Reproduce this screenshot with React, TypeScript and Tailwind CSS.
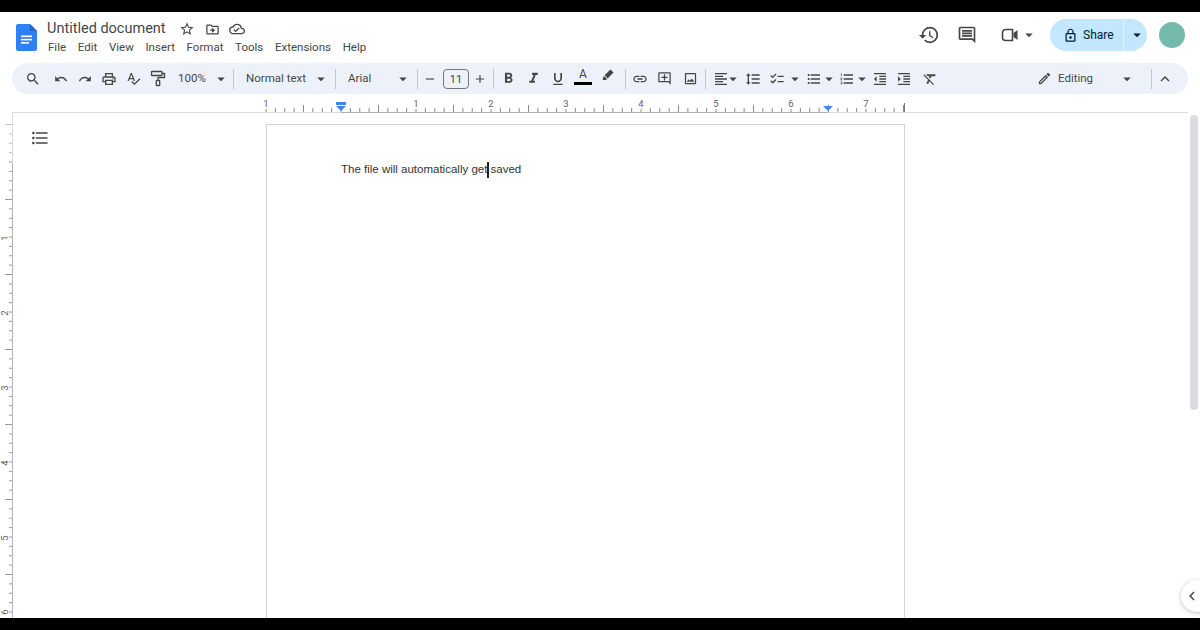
import { ReactNode } from "react"
import {
  MdSearch, MdUndo, MdRedo, MdOutlinePrint, MdSpellcheck, MdArrowDropDown,
  MdRemove, MdAdd, MdFormatBold, MdFormatItalic, MdFormatUnderlined, MdLink, MdOutlineAddComment,
  MdOutlineImage, MdFormatAlignLeft, MdFormatLineSpacing, MdChecklist, MdFormatListBulleted,
  MdFormatListNumbered, MdFormatIndentDecrease, MdFormatIndentIncrease, MdFormatClear, MdOutlineEdit,
  MdKeyboardArrowUp, MdKeyboardArrowLeft, MdStarBorder, MdOutlineDriveFileMove, MdOutlineCloudDone,
  MdHistory, MdOutlineComment, MdLockOutline,
} from "react-icons/md"

const menus = ["File", "Edit", "View", "Insert", "Format", "Tools", "Extensions", "Help"]

function Btn({ children, w = "w-[25px]" }: { children: ReactNode; w?: string }) {
  return <div className={`${w} h-6 flex items-center justify-center shrink-0 text-[#444746]`}>{children}</div>
}

function Divider({ className = "" }: { className?: string }) {
  return <div className={`w-px h-[20px] bg-[#c7c7c7] shrink-0 ${className}`} />
}

function Caret({ className = "" }: { className?: string }) {
  return <MdArrowDropDown size={18} className={`text-[#444746] shrink-0 ${className}`} />
}

function DocsLogo() {
  return (
    <svg width="21" height="27" viewBox="0 0 21 27" className="shrink-0">
      <path d="M2 0h12l7 7v18a2 2 0 0 1-2 2H2a2 2 0 0 1-2-2V2a2 2 0 0 1 2-2z" fill="#2f80f5" />
      <path d="M14 0l7 7h-7z" fill="#2a62c9" />
      <rect x="5" y="11.5" width="11" height="1.6" fill="#fff" />
      <rect x="5" y="14.8" width="11" height="1.6" fill="#fff" />
      <rect x="5" y="18.1" width="8" height="1.6" fill="#fff" />
    </svg>
  )
}

function PaintRoller() {
  return (
    <svg width="16" height="17" viewBox="0 0 16 17" fill="none" stroke="#444746" strokeWidth="1.3">
      <rect x="1.5" y="1.5" width="10.5" height="4" rx="0.6" />
      <path d="M12 3.5h2.5v4H8v3" />
      <rect x="6.3" y="10.5" width="3.4" height="5" rx="0.6" />
    </svg>
  )
}

function Marker() {
  return (
    <svg width="14" height="14" viewBox="0 0 14 14" fill="#444746" className="-mt-[7px]">
      <path d="M9.4 1.5l3.1 3.1-5.8 5.8-3.1-3.1z" />
      <path d="M3 8l3 3-1 1H1.8v-1.8z" />
    </svg>
  )
}

function Camera() {
  return (
    <svg width="18" height="16" viewBox="0 0 18 16" fill="none" stroke="#444746" strokeWidth="1.6">
      <path d="M4.5 2.5h7v11h-7a3 3 0 0 1-3-3v-5a3 3 0 0 1 3-3z" />
      <path d="M12.5 6l4-3v10l-4-3z" fill="#444746" stroke="none" />
    </svg>
  )
}

function HRuler() {
  const ticks = []
  for (let k = -8; k <= 60; k++) {
    const x = 329 + 9.375 * k
    if (x > 892) break
    const half = k % 8 === 4 || k % 8 === -4
    const inch = k % 8 === 0
    ticks.push(<line key={k} x1={x} x2={x} y1={half ? 7 : inch ? 11 : 10} y2={14} stroke="#8a8a8a" strokeWidth="1" />)
  }
  const labels: [string, number][] = [["1", 254], ["1", 404], ["2", 479], ["3", 554], ["4", 629], ["5", 704], ["6", 779], ["7", 854]]
  return (
    <svg width="1176" height="15" viewBox="0 0 1176 15" className="block">
      {ticks}
      {labels.map(([t, x], i) => (
        <text key={i} x={x} y={9} fontSize="9.5" textAnchor="middle" fill="#5f6368" fontFamily="Roboto, sans-serif">{t}</text>
      ))}
      <line x1="892.5" x2="892.5" y1="5" y2="14" stroke="#777" />
      <rect x="0" y="14" width="1176" height="1" fill="#dadce0" />
      <rect x="329" y="14" width="487" height="1" fill="#b0b0b0" />
      <rect x="324" y="4" width="10" height="3" fill="#4285f4" />
      <path d="M324 8h10l-5 5z" fill="#4285f4" />
      <path d="M811 8h10l-5 5z" fill="#4285f4" />
    </svg>
  )
}

function VRuler() {
  const ticks = []
  for (let k = 0; k <= 54; k++) {
    const y = 11.5 + 9.375 * k
    const long = k % 8 === 0
    ticks.push(<line key={k} x1={long ? 5 : 9} x2={12} y1={y} y2={y} stroke={k < 4 ? "#c4c4c4" : "#999"} />)
  }
  const labels: [string, number][] = [["1", 125], ["2", 200], ["3", 275], ["4", 350], ["5", 425], ["6", 499]]
  return (
    <svg width="13" height="505" viewBox="0 0 13 505" className="block shrink-0">
      {ticks}
      {labels.map(([t, y], i) => (
        <text key={i} x={8} y={y} fontSize="9.5" textAnchor="middle" fill="#5f6368" fontFamily="Roboto, sans-serif" transform={`rotate(-90 8 ${y})`}>{t}</text>
      ))}
      <line x1="12.5" x2="12.5" y1="0" y2="50" stroke="#dadce0" />
      <line x1="12.5" x2="12.5" y1="50" y2="505" stroke="#b5b5b5" />
    </svg>
  )
}

export default function App() {
  return (
    <div className="h-[630px] w-[1200px] flex flex-col bg-white overflow-hidden relative font-['Roboto',sans-serif]">
      <div className="h-3 bg-black shrink-0" />

      {/* title bar */}
      <header className="h-[50px] shrink-0 flex items-start pl-4 pr-[15px] pt-[7px]">
        <div className="mt-[5px]"><DocsLogo /></div>
        <div className="ml-[10px] flex flex-col">
          <div className="flex items-center h-[20px]">
            <span className="text-[14.5px] text-[#444746] leading-5">Untitled document</span>
            <MdStarBorder size={16} className="ml-[13px] text-[#444746]" />
            <MdOutlineDriveFileMove size={15} className="ml-[10px] text-[#444746]" />
            <MdOutlineCloudDone size={16} className="ml-[9px] text-[#444746]" />
          </div>
          <nav className="flex -mt-[2px] gap-[11.7px] text-[11.5px] leading-5 text-[#444746] pl-px">
            {menus.map(m => <span key={m}>{m}</span>)}
          </nav>
        </div>
        <div className="ml-auto flex items-center h-[32px]">
          <MdHistory size={22} className="text-[#444746] ml-px" />
          <MdOutlineComment size={20} className="ml-[17px] text-[#444746]" />
          <div className="ml-[24px]"><Camera /></div>
          <Caret className="ml-[1px]" />
          <div className="ml-[12px] w-[97px] h-[32px] rounded-full bg-[#c2e7ff] flex items-center text-[#001d35]">
            <MdLockOutline size={15} className="ml-[13px]" />
            <span className="ml-[5px] text-[12px] w-[32px]">Share</span>
            <div className="ml-[8px] w-px h-full bg-[#e6f3fc]" />
            <MdArrowDropDown size={18} className="ml-[4px]" />
          </div>
          <div className="ml-3 w-[26px] h-[26px] rounded-full bg-[#74b9ac]" />
        </div>
      </header>

      {/* toolbar */}
      <div className="mx-3 mt-px h-[31px] shrink-0 rounded-full bg-[#edf2fa] flex items-center pl-[9px] pr-[10px] text-[11.5px] text-[#444746]">
        <Btn w="w-6"><MdSearch size={16} /></Btn>
        <Btn w="w-[3px]"><span /></Btn>
        <Btn><MdUndo size={14} /></Btn>
        <Btn w="w-[24px]"><MdRedo size={14} /></Btn>
        <Btn w="w-[24px]"><MdOutlinePrint size={16} /></Btn>
        <Btn w="w-[24px]"><MdSpellcheck size={15} /></Btn>
        <Btn><PaintRoller /></Btn>
        <span className="ml-[8px] w-[30px]">100%</span>
        <Caret className="ml-[4px]" />
        <Divider className="ml-[3px]" />
        <span className="ml-[12px] w-[60px] whitespace-nowrap">Normal text</span>
        <Caret className="ml-[6px]" />
        <Divider className="ml-[5px]" />
        <span className="ml-[12px] w-[26px]">Arial</span>
        <Caret className="ml-[20px]" />
        <Divider className="ml-[5px]" />
        <MdRemove size={14} className="ml-[5px]" />
        <div className="ml-[6px] w-[26px] h-[20px] border border-[#747775] rounded-[4px] flex items-center justify-center text-[11px] leading-none pt-px">11</div>
        <MdAdd size={14} className="ml-[4px]" />
        <Divider className="ml-[6px]" />
        <Btn w="w-[28px]"><MdFormatBold size={17} /></Btn>
        <Btn w="w-[22px]"><MdFormatItalic size={17} /></Btn>
        <Btn w="w-[28px]"><MdFormatUnderlined size={16} /></Btn>
        <div className="w-[22px] h-6 flex flex-col items-center justify-start shrink-0">
          <span className="text-[12px] leading-[14px]">A</span>
          <div className="w-[18px] h-[3px] bg-black mt-px" />
        </div>
        <Btn w="w-[28px]"><Marker /></Btn>
        <Divider className="ml-[3px]" />
        <Btn w="w-[27px]"><MdLink size={16} /></Btn>
        <Btn w="w-[23px]"><MdOutlineAddComment size={15} /></Btn>
        <Btn w="w-[28px]"><MdOutlineImage size={15} /></Btn>
        <Divider className="ml-[1px]" />
        <div className="ml-[4px]"><Btn w="w-[22px]"><MdFormatAlignLeft size={16} /></Btn></div>
        <Caret className="-ml-[8px]" />
        <Btn w="w-[22px]"><MdFormatLineSpacing size={16} /></Btn>
        <Btn w="w-[26px]"><MdChecklist size={16} /></Btn>
        <Caret className="-ml-[4px]" />
        <Btn w="w-[19px]"><MdFormatListBulleted size={16} /></Btn>
        <Caret className="-ml-[3px]" />
        <Btn w="w-[18px]"><MdFormatListNumbered size={16} /></Btn>
        <Caret className="-ml-[3px]" />
        <Btn w="w-[18px]"><MdFormatIndentDecrease size={16} /></Btn>
        <Btn w="w-[30px]"><MdFormatIndentIncrease size={16} /></Btn>
        <Btn w="w-[22px]"><MdFormatClear size={16} /></Btn>
        <MdOutlineEdit size={15} className="ml-[96px]" />
        <span className="ml-[6px] w-[36px]">Editing</span>
        <Caret className="ml-[24px]" />
        <Divider className="ml-[15px]" />
        <MdKeyboardArrowUp size={18} className="ml-[4px]" />
      </div>

      {/* ruler */}
      <div className="mt-1 ml-3 h-[15px] shrink-0"><HRuler /></div>

      {/* body */}
      <main className="flex-1 min-h-0 flex overflow-hidden">
        <VRuler />
        <aside className="w-[253px] shrink-0 pl-[17px] pt-[15px]">
          <MdFormatListBulleted size={20} className="text-[#444746]" />
        </aside>
        <div className="mt-[11px] w-[639px] h-[700px] shrink-0 border border-[#d3d3d6] bg-white pl-[74px] pt-[36px] text-[11.5px] leading-[17px] text-[#333] font-['Liberation_Sans',sans-serif] whitespace-pre">
          The file will automatically get<span className="inline-block w-0 relative"><span className="absolute left-0 -top-[11px] w-[2px] h-[16px] bg-[#222]" /></span> saved
        </div>
        <div className="flex-1 flex justify-end pr-[2px] pt-[2px]">
          <div className="w-2 h-[295px] rounded-full bg-[#dadce0]" />
        </div>
      </main>

      <div className="h-3 bg-black shrink-0" />

      <div className="absolute left-[1181px] top-[580px] w-8 h-8 rounded-full bg-white shadow-[0_1px_4px_rgba(60,64,67,0.35)] flex items-center pl-[2px] text-[#444746]">
        <MdKeyboardArrowLeft size={18} />
      </div>
    </div>
  )
}
